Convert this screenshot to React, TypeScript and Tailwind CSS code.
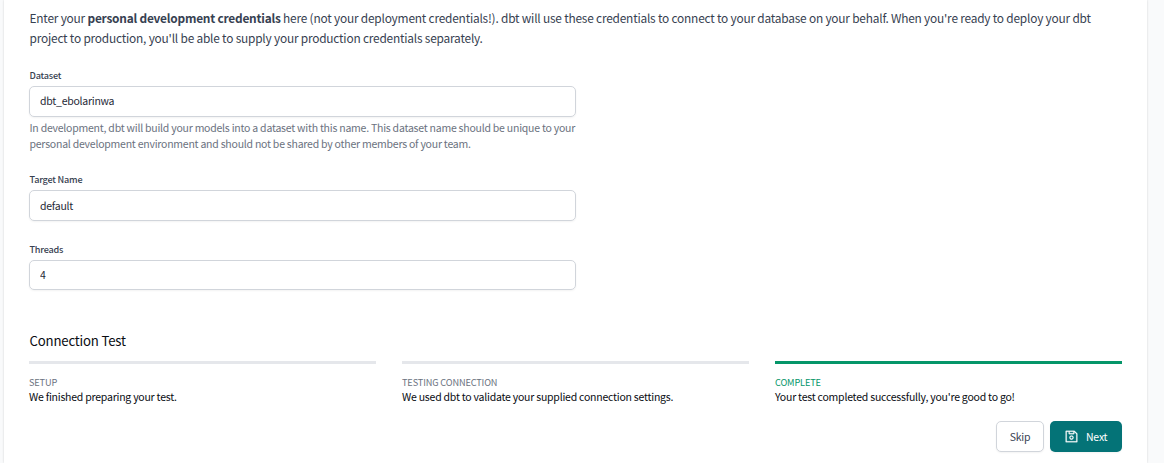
import { AiOutlineSave } from "react-icons/ai";

const fields = [
  {
    label: "Dataset",
    value: "dbt_ebolarinwa",
    wrap: "h-[104px]",
    box: "h-[31px] pb-[2px]",
    help: "In development, dbt will build your models into a dataset with this name. This dataset name should be unique to your personal development environment and should not be shared by other members of your team.",
  },
  { label: "Target Name", value: "default", wrap: "h-[70px]", box: "h-[31px]" },
  { label: "Threads", value: "4", wrap: "h-[70px]", box: "h-[30px] pb-px" },
];

const steps = [
  { name: "Setup", text: "We finished preparing your test.", done: false },
  { name: "Testing connection", text: "We used dbt to validate your supplied connection settings.", done: false },
  { name: "Complete", text: "Your test completed successfully, you're good to go!", done: true },
];

export default function App() {
  return (
    <div className="h-[463px] w-[1164px] overflow-hidden bg-[#f9fafb] pl-1 font-['Noto_Sans_CJK_SC',sans-serif]">
      <main className="h-full w-[1143px] bg-white pr-[25px] pl-[25px] shadow-[0_0_2px_rgba(0,0,0,0.16)]">
        <p className="h-[67px] pt-2 pl-[0.5px] text-[11.9px] leading-5 tracking-[-0.208px] text-[#374151]">
          Enter your <strong className="font-bold tracking-[-0.23px]">personal development credentials</strong> here (not
          your deployment credentials!). dbt will use these credentials to connect to your database on your behalf. When
          you're ready to deploy your dbt project to production, you'll be able to supply your production credentials
          separately.
        </p>
        <form className="w-[547px]">
          {fields.map((f) => (
            <div key={f.label} className={f.wrap}>
              <label className="block h-[19px] pl-[0.5px] text-[9.1px] leading-[17px] font-medium tracking-[-0.2px] text-[#374151]">
                {f.label}
              </label>
              <input
                readOnly
                value={f.value}
                className={`block w-full rounded-[5px] border border-[#d1d5db] px-2.5 text-[10.5px] tracking-[-0.25px] text-[#1f2937] shadow-[0_1px_2px_rgba(0,0,0,0.05)] outline-none ${f.box}`}
              />
              {f.help && (
                <p className="-mr-1 pt-[3px] pl-[0.5px] text-[10.5px] leading-4 tracking-[-0.232px] text-[#6b7280]">
                  {f.help}
                </p>
              )}
            </div>
          ))}
        </form>
        <h2 className="mt-5 h-[30px] pl-[0.5px] text-[13.2px] leading-5 tracking-[-0.18px] text-[#090c12]">
          Connection Test
        </h2>
        <div className="grid grid-cols-3 gap-[26px]">
          {steps.map((s) => (
            <div key={s.name} className={`border-t-[3px] pt-[11px] ${s.done ? "border-[#059669]" : "border-[#e5e7eb]"}`}>
              <div
                className={`text-[9.2px] leading-[15px] tracking-[-0.14px] uppercase ${s.done ? "text-[#059669]" : "text-[#6b7280]"}`}
              >
                {s.name}
              </div>
              <div className="-mt-px pb-px text-[10.5px] leading-[15px] tracking-[-0.227px] text-[#090c12]">{s.text}</div>
            </div>
          ))}
        </div>
        <div className="mt-4 flex justify-end gap-1.5">
          <button className="h-[31px] w-12 rounded-[5px] border border-[#d1d5db] bg-white text-[10.5px] tracking-[-0.22px] text-[#374151] shadow-[0_1px_2px_rgba(0,0,0,0.05)]">
            Skip
          </button>
          <button className="flex h-[31px] w-[72px] items-center rounded-[5px] bg-[#047377] pl-[15px] text-[10.5px] tracking-[-0.22px] text-white shadow-[0_1px_2px_rgba(0,0,0,0.05)]">
            <AiOutlineSave size={15} strokeWidth={14} className="mr-[7px] -ml-px" />
            Next
          </button>
        </div>
      </main>
    </div>
  );
}
